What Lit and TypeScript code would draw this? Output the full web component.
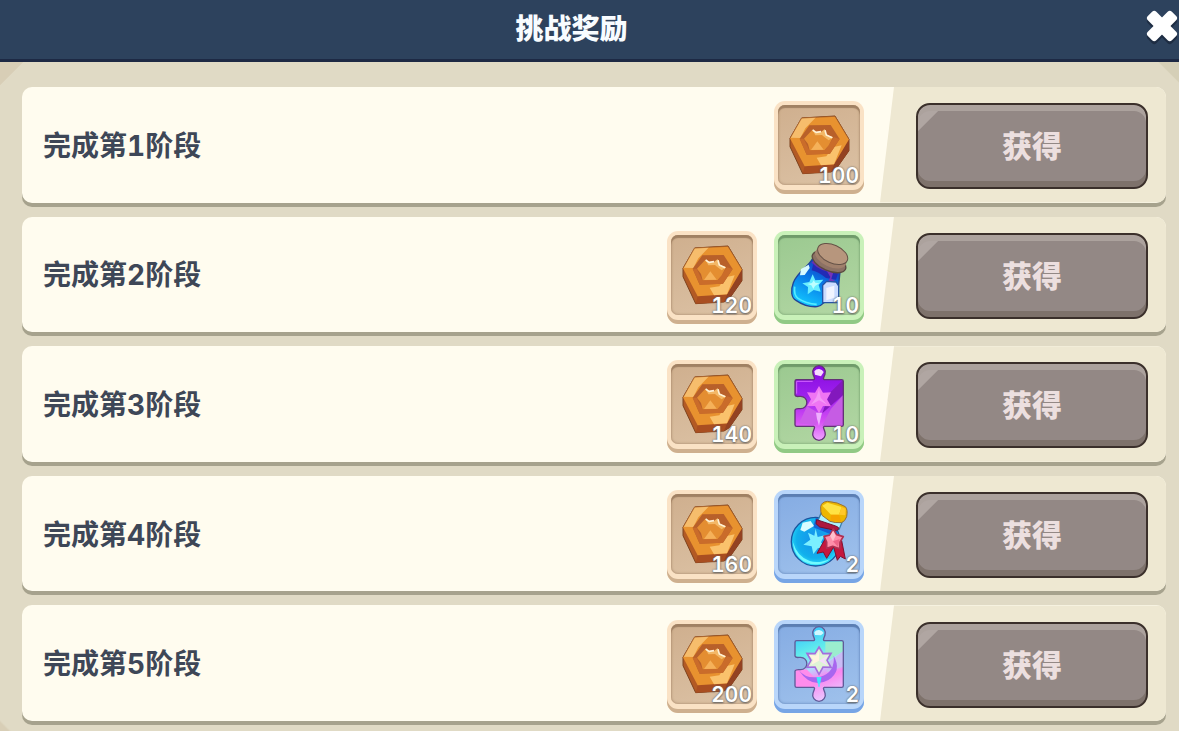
import { LitElement, html, css, svg } from "lit";
import { customElement, property } from "lit/decorators.js";

type ItemKind = "coin" | "bottle" | "puzzle" | "potion" | "prism";
type Tone = "bronze" | "green" | "blue";

interface Reward {
  kind: ItemKind;
  tone: Tone;
  label: string;
  count: number;
}

const coin = (count: number): Reward => ({ kind: "coin", tone: "bronze", label: "硬币", count });

const STAGES: Reward[][] = [
  [coin(100)],
  [coin(120), { kind: "bottle", tone: "green", label: "魔法瓶", count: 10 }],
  [coin(140), { kind: "puzzle", tone: "green", label: "紫色拼图", count: 10 }],
  [coin(160), { kind: "potion", tone: "blue", label: "高级药水", count: 2 }],
  [coin(200), { kind: "prism", tone: "blue", label: "彩色拼图", count: 2 }],
];

const PUZZLE =
  "M68 59H119C125 57 119 50 117 42A19 19 0 1 1 153 42C151 50 145 57 151 59H203Q208 59 208 64V194Q208 199 203 199H151C145 201 151 208 153 216A19 19 0 1 1 117 216C119 208 125 201 119 199H68Q63 199 63 194V150C65 144 72 146 80 146A18 18 0 1 0 80 109C72 109 65 112 63 105V64Q63 59 68 59Z";
const STAR6 =
  "M135 78L147 98L171 97L159 118L171 139L147 138L135 160L123 138L99 139L111 118L99 97L123 98Z";

const art = {
  coin: svg`
    <path d="M48 112L83 51L183 45L225 115V149L187 203L171 213L86 218L48 137Z" fill="#b35a24" stroke="#7d431f" stroke-width="3" stroke-linejoin="round"/>
    <path d="M92 196L180 190L171 213L86 218Z" fill="#a94e21"/>
    <path d="M180 190L225 115V149L187 203L171 213Z" fill="#934222"/>
    <path d="M48 112L83 51L183 46L225 115L180 190L92 196Z" fill="#e8922f"/>
    <path d="M82 52L126 49L94 82L79 111L50 110Z" fill="#f6bd6c"/>
    <path d="M203 133L176 139L157 166L128 170L141 193L180 190Z" fill="#fac26c"/>
    <path d="M48 112L83 51L183 46L225 115" fill="none" stroke="#9a5525" stroke-width="2"/>
    <path d="M77 113L106 73L170 72L197 114L168 158L98 161Z" fill="#b8602a"/>
    <path d="M168 158L98 161L77 113L89 113L106 148L153 147L180 109L197 114Z" fill="#ca6c2a"/>
    <path d="M90 113L115 86L125 96L142 94L153 86L156 102L177 109L164 133L152 147L107 148L102 129Z" fill="#e48e31"/>
    <path d="M130 121L149 146L111 147Z" fill="#f5b159"/>
    <path d="M115 85L125 95L141 93L152 84L156 101L177 109L164 118L150 107L144 102L124 103Z" fill="#f3b765"/>
    <path d="M116 87L126 94L141 92M153 88L157 102L175 110" fill="none" stroke="#fff2d5" stroke-width="5" stroke-linejoin="round"/>`,
  bottle: svg`
    <defs><linearGradient id="glass" x1="0.8" y1="0" x2="0.3" y2="1"><stop offset="0" stop-color="#1527b5"/><stop offset=".5" stop-color="#087be8"/><stop offset="1" stop-color="#12c9ff"/></linearGradient></defs>
    <path d="M115 84C102 108 72 121 58 155C49 178 52 201 66 208Q96 229 129 227Q142 224 150 215L190 202L198 122Z" fill="url(#glass)" stroke="#214398" stroke-width="4"/>
    <path d="M62 167Q59 193 72 202Q96 218 128 220" fill="none" stroke="#55ecff" stroke-width="5"/>
    <path d="M81 114L104 101L107 111L92 132L78 133Z" fill="#d8faff"/>
    <path d="M120 91Q153 125 195 117L186 146L156 141Q132 122 113 118Z" fill="#222bb5"/>
    <path d="M116 130L124 148L148 146L134 162L140 182L119 177L101 190L102 168L85 157L106 153Z" fill="#69efff"/>
    <path d="M119 148L124 155L136 157L123 165L118 174L112 163L100 159L114 156Z" fill="#bdffff"/>
    <path d="M116 91Q143 120 193 122" fill="none" stroke="#6930af" stroke-width="10"/>
    <path d="M158 119L178 124L172 143L184 150L163 151L169 138Z" fill="#7434ba"/>
    <path d="M146 163L158 151L186 153L194 165V215H146Z" fill="#cbdcff" stroke="#2654a4" stroke-width="4"/>
    <path d="M157 171L181 164V200L157 208Z" fill="#f1f4ff"/>
    <ellipse cx="165" cy="93" rx="54" ry="26" transform="rotate(24 165 93)" fill="#8c7164" stroke="#594940" stroke-width="4"/>
    <ellipse cx="170" cy="81" rx="50" ry="26" transform="rotate(24 170 81)" fill="#a0806c"/>
    <ellipse cx="176" cy="69" rx="48" ry="27" transform="rotate(24 176 69)" fill="#b7967d" stroke="#655247" stroke-width="3"/>`,
  puzzle: svg`
    <defs><linearGradient id="violet" x1="0" y1="0" x2="0" y2="1"><stop offset="0" stop-color="#8608df"/><stop offset=".42" stop-color="#9e22ed"/><stop offset=".75" stop-color="#d64ff4"/><stop offset="1" stop-color="#f0a4ff"/></linearGradient></defs>
    <path d=${PUZZLE} fill="url(#violet)"/>
    <path d="M171 146L207 105V198H144Z" fill="#c65ce4"/>
    <path d="M169 97L207 60V105L145 160L158 122Z" fill="#8318bd"/>
    <path d="M99 139L135 160L126 196L75 190Z" fill="#cc5de9"/>
    <path d=${STAR6} fill="#ef75f3"/>
    <path d="M135 88L140 113L160 134L135 121L111 134L127 112Z" fill="#f497f7"/>
    <path d="M126 158L144 158L139 179L135 198L129 177Z" fill="#efb0ff"/>
    <path d="M121 34A16 16 0 0 1 149 36L141 49L123 44Z" fill="#f7d9ff"/>
    <path d="M68 64H116M68 64V101" stroke="#d365ff" stroke-width="3"/>
    <path d=${PUZZLE} fill="none" stroke="#633276" stroke-width="4"/>`,
  potion: svg`
    <defs><radialGradient id="orb" cx=".5" cy=".45" r=".6"><stop offset="0" stop-color="#168feb"/><stop offset=".65" stop-color="#11afec"/><stop offset="1" stop-color="#34edff"/></radialGradient></defs>
    <circle cx="125" cy="155" r="73" fill="url(#orb)" stroke="#1a559f" stroke-width="4"/>
    <path d="M125 84Q178 87 194 138L168 132L118 112Z" fill="#1264d6"/>
    <path d="M57 157A67 67 0 0 0 169 206Q134 222 107 213Q70 201 57 157Z" fill="#71faff"/>
    <path d="M86 98L110 93L120 108L91 125L79 120Z" fill="#d8fdff"/>
    <path d="M125 116L131 141L152 136L141 157L157 176L132 174L118 192L113 169L88 164L109 149L102 128L121 137Z" fill="#7befff"/>
    <path d="M132 91L142 68L206 92L195 119L166 118Z" fill="#aaf3ff" stroke="#377eae" stroke-width="4"/>
    <path d="M128 89L185 108Q202 114 188 122L137 111L126 101Z" fill="#ad173e" stroke="#71112f" stroke-width="3"/>
    <path d="M155 144L129 190L148 186L158 205L181 168ZM178 168L190 211L199 199L214 207L203 152Z" fill="#c5173e" stroke="#7b1231" stroke-width="3"/>
    <path d="M140 50Q142 36 160 34Q192 36 214 50Q222 58 218 80Q213 95 202 98Q182 99 168 94L144 76Q139 68 140 50Z" fill="#edb600" stroke="#93703c" stroke-width="3"/>
    <path d="M145 47L160 38L203 51L195 74L171 74Z" fill="#ffe243"/>
    <path d="M171 74L195 74L202 95L169 92Z" fill="#f5a300"/><path d="M203 51L215 56L214 76L195 74Z" fill="#ffc82a"/>
    <path d="M178 117L188 134L208 140L198 156L197 176L176 169L158 175L158 156L150 139L168 135Z" fill="#ff8ea9" stroke="#af3153" stroke-width="5" stroke-linejoin="round"/>
    <path d="M177 122L185 137L177 154L168 137Z" fill="#ffc0cd"/><path d="M177 154L197 147L192 171Z" fill="#ef6689"/>`,
  prism: svg`
    <defs><linearGradient id="rainbow" x1=".25" y1="0" x2=".5" y2="1"><stop offset="0" stop-color="#35bfff"/><stop offset=".33" stop-color="#63edeb"/><stop offset=".55" stop-color="#b5d9ff"/><stop offset=".72" stop-color="#fb84f0"/><stop offset="1" stop-color="#eac7ff"/></linearGradient></defs>
    <g transform="translate(0 3)">
      <path d=${PUZZLE} fill="url(#rainbow)"/>
      <path d="M154 62H207V91L166 116L154 96Z" fill="#9bedce"/><path d="M207 91V137L157 154L167 121Z" fill="#c9bbf5"/>
      <path d="M64 145H98L135 184L121 198H64Z" fill="#ff8cec"/>
      <path d="M73 146Q97 176 139 167Q184 154 179 104Q205 150 163 177Q113 205 73 146Z" fill="#a866ef"/>
      <path d="M135 183V197M130 170L140 170L137 186H133Z" fill="#3de9ff" stroke="#3de9ff" stroke-width="4"/>
      <path d=${STAR6} fill="#dff3d6" stroke="#a36ddd" stroke-width="5"/>
      <path d="M135 90V119L111 132L118 116L105 102L126 104Z" fill="#fff4de"/><path d="M135 119L163 103L151 119L161 134Z" fill="#f5ddfa"/>
      <path d="M121 34A16 16 0 0 1 149 36L141 43L123 42Z" fill="#cff8ff"/>
      <path d=${PUZZLE} fill="none" stroke="#605b99" stroke-width="4"/>
    </g>`,
};

@customElement("reward-tile")
class RewardTile extends LitElement {
  @property({ attribute: false }) reward!: Reward;

  static styles = css`
    :host { display: block; }
    .tile {
      display: grid;
      box-sizing: border-box;
      width: 90px;
      height: 93px;
      border-radius: 11px;
    }
    .bronze { --rim: #fae2c5; --edge: #ceb08f; --face: #cfaf8e; --glow: #dcc2a5; --shade: #a08163; }
    .green { --rim: #c9f1b9; --edge: #91c985; --face: #9bc990; --glow: #b3d7a4; --shade: #6f9b6a; }
    .blue { --rim: #b9d6fa; --edge: #77a5e5; --face: #85ace3; --glow: #a0c2ec; --shade: #5b7eb2; }
    .tile { background: var(--rim); box-shadow: inset 0 -4px var(--edge); }
    .face {
      grid-area: 1 / 1;
      margin: 4px 4px 9px;
      border-radius: 7px;
      background: linear-gradient(160deg, var(--face), var(--glow));
      box-shadow: inset 0 3px 1px var(--shade), inset 0 0 3px var(--shade);
    }
    .art { grid-area: 1 / 1; width: 90px; height: 93px; }
    .count {
      grid-area: 1 / 1;
      place-self: end;
      padding: 0 5px 7px 0;
      font: 600 21px/22px Inter, "Noto Sans", sans-serif;
      font-variant-numeric: tabular-nums;
      color: #fff;
      text-shadow: 0 0 2px #666, 0 1px 2px #666;
      z-index: 1;
    }
  `;

  render() {
    const { kind, tone, label, count } = this.reward;
    return html`<div class="tile ${tone}">
      <div class="face"></div>
      <svg class="art" viewBox="0 0 270 279" role="img" aria-label=${label}>${art[kind]}</svg>
      <span class="count">${count}</span>
    </div>`;
  }
}

@customElement("app-root")
class AppRoot extends LitElement {
  static styles = css`
    :host {
      display: flex;
      flex-direction: column;
      min-height: 100vh;
      font-family: Inter, "Noto Sans CJK SC", sans-serif;
      background: #e0dac5;
    }
    .header {
      display: flex;
      align-items: center;
      box-sizing: border-box;
      height: 62px;
      padding-bottom: 4px;
      background: #2d425d;
      box-shadow: inset 0 -3px #1d2944;
    }
    .title {
      flex: 1;
      margin: 0;
      text-align: center;
      font-size: 28px;
      line-height: 40px;
      font-weight: 900;
      color: #f8fcff;
    }
    .close {
      display: block;
      width: 36px;
      height: 40px;
      padding: 0;
      border: 0;
      background: none;
      cursor: pointer;
    }
    .close svg { display: block; width: 36px; height: 40px; }
    .panel {
      flex: 1;
      display: grid;
      padding: 25px 13px 10px 22px;
      background:
        linear-gradient(135deg, #d8ceb6 16px, transparent 17px),
        linear-gradient(225deg, #d5cfb7 14px, transparent 15px),
        linear-gradient(45deg, #d8ceb6 6px, transparent 8px),
        #e0dac5;
    }
    .stages {
      display: grid;
      grid-auto-rows: 1fr;
      gap: 14px;
      margin: 0;
      padding: 0;
      list-style: none;
    }
    .stage {
      display: flex;
      align-items: stretch;
      border-radius: 10px;
      background: #fffcef;
      box-shadow: 0 4px #a6a28d;
    }
    .name {
      flex: 1;
      align-self: center;
      margin: 0;
      padding: 2px 0 0 21px;
      font-size: 28px;
      line-height: 40px;
      font-weight: 700;
      font-variant-numeric: tabular-nums;
      color: #3e4757;
    }
    .rewards { display: flex; align-items: center; gap: 17px; padding: 6px 16px 0 0; }
    .action {
      display: flex;
      align-items: center;
      justify-content: flex-end;
      box-sizing: border-box;
      width: 286px;
      padding: 15px 18px 12px;
      border-radius: 0 10px 10px 0;
      background: #eee8d2;
      clip-path: polygon(14px 0, 100% 0, 100% 100%, 0 100%);
    }
    .claim {
      box-sizing: border-box;
      width: 232px;
      height: 86px;
      padding: 0;
      border: 2px solid #3b302b;
      border-radius: 14px;
      background: linear-gradient(135deg, #b0a6a2 18px, #938885 19px);
      box-shadow: inset 0 6px #aca29d, inset 0 -6px #7e726b;
      font: 900 30px/40px Inter, "Noto Sans CJK SC", sans-serif;
      color: #ecdfdf;
      cursor: pointer;
    }
  `;

  render() {
    return html`
      <header class="header">
        <h1 class="title">挑战奖励</h1>
        <button class="close" aria-label="关闭">
          <svg viewBox="0 0 36 40" aria-hidden="true">
            <g transform="translate(19 20) rotate(45)" fill="#1e2d43">
              <rect x="-17" y="-6" width="34" height="12" rx="3"/>
              <rect x="-6" y="-17" width="12" height="34" rx="3"/>
            </g>
            <g transform="translate(19 17) rotate(45)" fill="#fff">
              <rect x="-17" y="-6" width="34" height="12" rx="3"/>
              <rect x="-6" y="-17" width="12" height="34" rx="3"/>
            </g>
          </svg>
        </button>
      </header>
      <main class="panel">
        <ol class="stages">
          ${STAGES.map(
            (rewards, i) => html`<li class="stage">
              <h2 class="name">完成第${i + 1}阶段</h2>
              <div class="rewards">
                ${rewards.map((r) => html`<reward-tile .reward=${r}></reward-tile>`)}
              </div>
              <div class="action"><button class="claim">获得</button></div>
            </li>`
          )}
        </ol>
      </main>
    `;
  }
}
